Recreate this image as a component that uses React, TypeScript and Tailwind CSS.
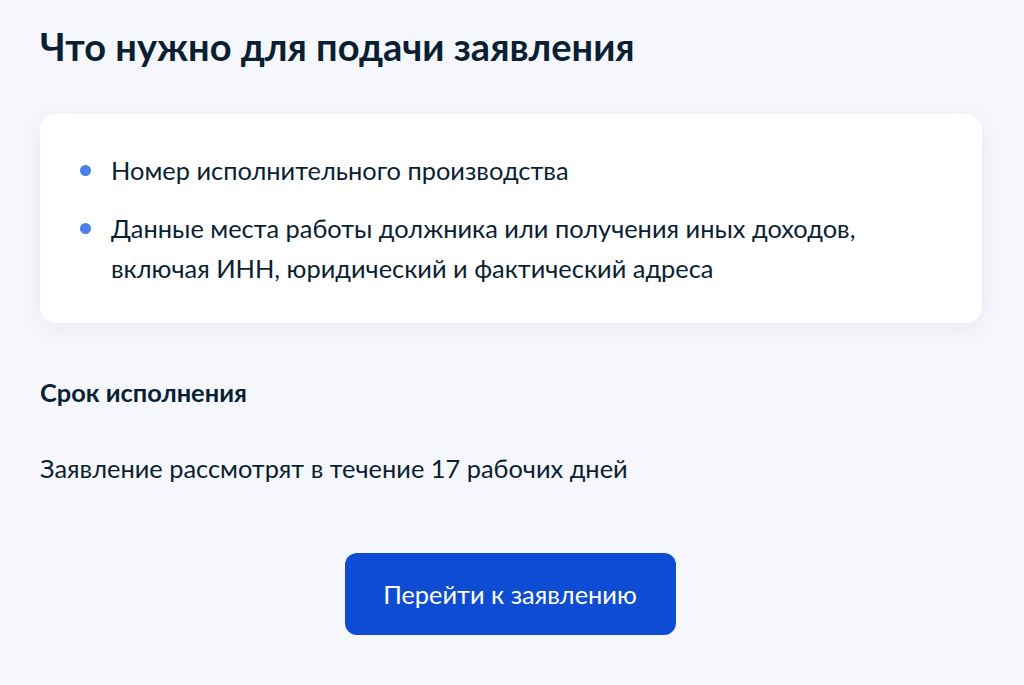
import React from "react";

export default function App() {
  return (
    <div className="min-h-[685px] w-[1024px] bg-[#f5f7fc] text-[#0b1f33] px-10 pt-[22px]" style={{ fontFamily: "Lato, 'Noto Sans', sans-serif" }}>
      <h1 className="text-[38px] leading-[48px] font-bold">Что нужно для подачи заявления</h1>
      <div className="mt-[44px] w-[942px] rounded-2xl bg-white shadow-[0_6px_24px_rgba(11,31,51,0.06)] px-10 pt-[36px] pb-[35px]">
        <ul className="flex flex-col gap-[18px] text-[25.4px] leading-[40px]">
          <li className="flex">
            <span className="mt-[15px] mr-[20px] h-[11px] w-[11px] shrink-0 rounded-full bg-[#4a80ec]" />
            <span>Номер исполнительного производства</span>
          </li>
          <li className="flex">
            <span className="mt-[15px] mr-[20px] h-[11px] w-[11px] shrink-0 rounded-full bg-[#4a80ec]" />
            <span>
              Данные места работы должника или получения иных доходов,
              <br />
              включая ИНН, юридический и фактический адреса
            </span>
          </li>
        </ul>
      </div>
      <div className="mt-[51px] text-[25.4px] leading-[36px] font-bold">Срок исполнения</div>
      <div className="mt-[40px] text-[25.4px] leading-[36px]">Заявление рассмотрят в течение 17 рабочих дней</div>
      <div className="mt-[67px] flex justify-center pr-[4px]">
        <button className="h-[82px] w-[331px] rounded-xl bg-[#0d4cd3] text-white text-[25.4px]">Перейти к заявлению</button>
      </div>
    </div>
  );
}
